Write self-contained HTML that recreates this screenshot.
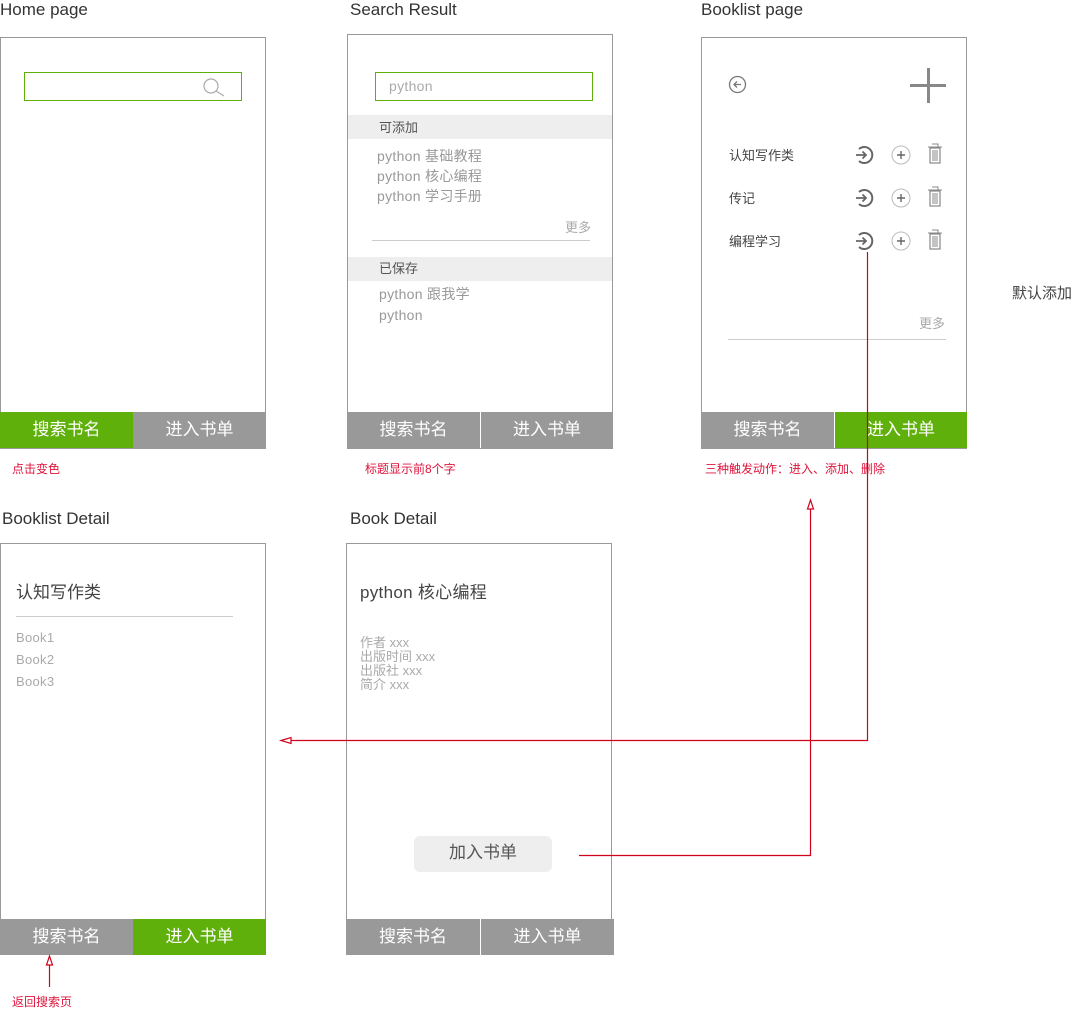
<!DOCTYPE html>
<html><head><meta charset="utf-8"><style>
body{margin:0;width:1076px;height:1011px;position:relative;background:#fff;font-family:"Liberation Sans","Noto Sans CJK SC",sans-serif;overflow:hidden}
div{position:absolute;box-sizing:border-box}
.f{border:1px solid #999;background:#fff}
.t{white-space:nowrap}
.b{color:#fff;font-size:17px;text-align:center;height:36px;line-height:36px}
.g{background:#999}.gr{background:#5fb00a}
.r{color:#e0143c;font-size:12px}
.l{color:#999;font-size:14px;letter-spacing:0.3px}
.h{color:#333;font-size:17px}
.hd{background:#eee}
</style></head><body>
<div class="t h" style="left:0;top:0;line-height:20px">Home page</div>
<div class="t h" style="top:0;left:350px;line-height:20px">Search Result</div>
<div class="t h" style="left:701px;top:0;line-height:20px">Booklist page</div>
<div class="t h" style="left:2px;top:509px;line-height:20px">Booklist Detail</div>
<div class="t h" style="left:350px;top:509px;line-height:20px">Book Detail</div>

<!-- Home -->
<div class="f" style="left:0;top:37px;width:266px;height:412px"></div>
<div style="left:24px;top:72px;width:218px;height:29px;border:1px solid #5fb00a"></div>
<svg style="position:absolute;left:200px;top:76px" width="28" height="24"><circle cx="11" cy="10" r="7" fill="none" stroke="#aaa" stroke-width="1.2"/><line x1="16" y1="15" x2="24" y2="20" stroke="#aaa" stroke-width="1.2"/></svg>
<div class="b gr" style="left:0;top:412px;width:133px">搜索书名</div>
<div class="b g" style="left:133px;top:412px;width:133px">进入书单</div>
<div class="t r" style="left:12px;top:460px;line-height:18px">点击变色</div>

<!-- Search -->
<div class="f" style="left:347px;top:34px;width:266px;height:415px"></div>
<div style="left:375px;top:72px;width:218px;height:29px;border:1px solid #5fb00a"></div>
<div class="t" style="left:389px;top:77px;line-height:18px;font-size:14px;color:#aaa;letter-spacing:0.3px">python</div>
<div class="hd" style="left:348px;top:115px;width:264px;height:24px"></div>
<div class="t" style="left:379px;top:119px;line-height:18px;font-size:13px;color:#555">可添加</div>
<div class="t l" style="left:377px;top:146px;line-height:20px">python 基础教程<br>python 核心编程<br>python 学习手册</div>
<div class="t" style="left:565px;top:219px;font-size:13px;color:#aaa;line-height:18px">更多</div>
<div style="left:372px;top:240px;width:218px;height:1px;background:#ccc"></div>
<div class="hd" style="left:348px;top:257px;width:264px;height:24px"></div>
<div class="t" style="left:379px;top:260px;line-height:18px;font-size:13px;color:#555">已保存</div>
<div class="t l" style="left:379px;top:284px;line-height:21px">python 跟我学<br>python</div>
<div class="b g" style="left:347px;top:412px;width:133px">搜索书名</div>
<div class="b g" style="left:480px;top:412px;width:133px;border-left:1px solid #fff">进入书单</div>
<div class="t r" style="left:365px;top:460px;line-height:18px">标题显示前8个字</div>

<!-- Booklist -->
<div class="f" style="left:701px;top:37px;width:266px;height:412px"></div>
<svg style="position:absolute;left:728px;top:75px" width="20" height="20"><circle cx="9.5" cy="9.5" r="8" fill="none" stroke="#777" stroke-width="1.3"/><path d="M13 9.5H6M9 6.5L6 9.5L9 12.5" fill="none" stroke="#777" stroke-width="1.3"/></svg>
<div style="left:927px;top:68px;width:3px;height:35px;background:#888"></div>
<div style="left:910px;top:84px;width:36px;height:3px;background:#888"></div>
<div class="t" style="left:729px;top:146px;font-size:13px;color:#444;line-height:20px">认知写作类</div>
<div class="t" style="left:729px;top:189px;font-size:13px;color:#444;line-height:20px">传记</div>
<div class="t" style="left:729px;top:232px;font-size:13px;color:#444;line-height:20px">编程学习</div>
<svg style="position:absolute;left:850px;top:140px" width="100" height="115">
<g id="row">
<path d="M9 9 A8 8 0 1 1 9 21" fill="none" stroke="#666" stroke-width="2"/><path d="M6 15H16M12.5 11.5L16 15L12.5 18.5" fill="none" stroke="#666" stroke-width="1.8"/>
<circle cx="51" cy="15" r="9" fill="none" stroke="#bbb" stroke-width="1"/><path d="M47 15H55M51 11V19" stroke="#666" stroke-width="1.4"/>
<rect x="80" y="8" width="10" height="15" fill="none" stroke="#888" stroke-width="1.2"/><path d="M78 7H92M82 4H88V7M83 10V21M85 10V21M87 10V21" fill="none" stroke="#888" stroke-width="1"/>
</g>
<use href="#row" y="43"/><use href="#row" y="86"/>
</svg>
<div class="t" style="left:919px;top:315px;font-size:13px;color:#aaa;line-height:18px">更多</div>
<div style="left:728px;top:339px;width:218px;height:1px;background:#ccc"></div>
<div class="b g" style="left:701px;top:412px;width:133px">搜索书名</div>
<div class="b gr" style="left:834px;top:412px;width:133px;border-left:1px solid #fff">进入书单</div>
<div class="t r" style="left:705px;top:460px;line-height:18px">三种触发动作：进入、添加、删除</div>
<div class="t" style="left:1012px;top:284px;font-size:15px;color:#444;line-height:20px">默认添加</div>

<!-- Booklist detail -->
<div class="f" style="left:0;top:543px;width:266px;height:412px"></div>
<div class="t" style="left:16px;top:582px;font-size:17px;color:#444;line-height:22px">认知写作类</div>
<div style="left:16px;top:616px;width:217px;height:1px;background:#ccc"></div>
<div class="t" style="left:16px;top:627px;font-size:13px;color:#aaa;line-height:22px;letter-spacing:0.3px">Book1<br>Book2<br>Book3</div>
<div class="b g" style="left:0;top:919px;width:133px">搜索书名</div>
<div class="b gr" style="left:133px;top:919px;width:133px">进入书单</div>
<div class="t r" style="left:12px;top:993px;line-height:18px">返回搜索页</div>

<!-- Book detail -->
<div class="f" style="left:346px;top:543px;width:266px;height:412px"></div>
<div class="t" style="left:360px;top:582px;font-size:17px;color:#444;line-height:22px;letter-spacing:0.3px">python 核心编程</div>
<div class="t" style="left:360px;top:636px;font-size:13px;color:#aaa;line-height:14px">作者 xxx<br>出版时间 xxx<br>出版社 xxx<br>简介 xxx</div>
<div style="left:414px;top:836px;width:138px;height:36px;background:#eee;border-radius:6px;color:#555;font-size:17px;text-align:center;line-height:34px">加入书单</div>
<div class="b g" style="left:346px;top:919px;width:134px">搜索书名</div>
<div class="b g" style="left:480px;top:919px;width:134px;border-left:1px solid #fff">进入书单</div>

<!-- arrows -->
<svg style="position:absolute;left:0;top:0" width="1076" height="1011">
<g stroke="#d0021b" stroke-width="1.2" fill="none">
<path d="M867.5 252V740.5H283"/><path d="M281 740.5L291 737.5V743.5Z" fill="#fff"/>
<path d="M579 855.5H810.5V503"/><path d="M810.5 500L807.5 509H813.5Z" fill="#fff"/>
<path d="M49.5 987V958"/><path d="M49.5 956L46.5 965H52.5Z" fill="#fff"/>
</g></svg>
</body></html>
